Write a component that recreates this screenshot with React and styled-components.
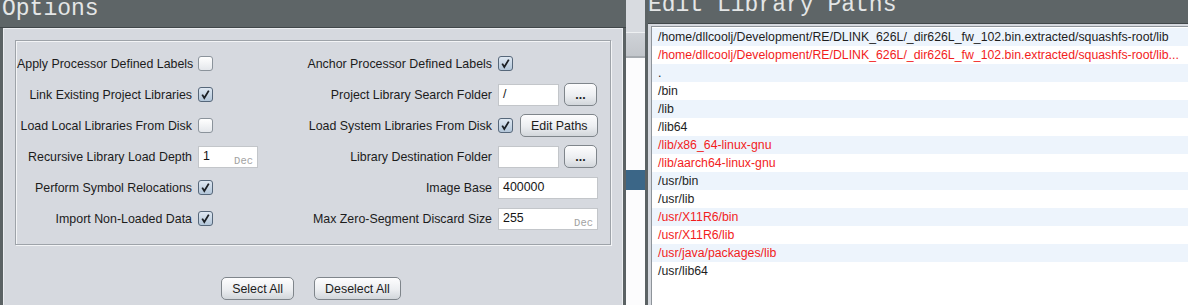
import React from 'react'
import styled, { createGlobalStyle } from 'styled-components'

const GlobalStyle = createGlobalStyle`
  html, body {
    margin: 0;
    padding: 0;
  }
  body {
    width: 1188px;
    height: 305px;
    overflow: hidden;
    background: #fcfcfd;
    font-family: "Liberation Sans", Arial, sans-serif;
    font-size: 12.4px;
    color: #1e1e1e;
  }
`

const Desktop = styled.div`
  display: flex;
  width: 1188px;
  height: 305px;
  overflow: hidden;
`

const TitleBar = styled.header`
  flex: none;
  height: ${(p) => p.height}px;
  line-height: ${(p) => p.lineHeight}px;
  background: #5e6567;
  border-bottom: 1px solid #41474a;
  color: #e4e6e6;
  font-family: "Liberation Mono", "Courier New", monospace;
  font-size: 23px;
  padding-left: ${(p) => p.indent}px;
  white-space: nowrap;
  overflow: hidden;
`

/* ---------- left: options window ---------- */

const OptionsWindow = styled.section`
  flex: none;
  width: 626px;
  display: flex;
  flex-direction: column;
`

const OptionsBody = styled.div`
  flex: 1;
  display: flex;
  flex-direction: column;
  background: #d6d9df;
  border-left: 3px solid #5b6264;
  border-right: 3px solid #5b6264;
  box-shadow: inset 1px 1px 0 #eceef1, inset -1px 0 0 #eceef1;
`

const GroupBox = styled.div`
  margin: 12px 12px 0 12px;
  border: 1px solid #9ea3a9;
  box-shadow: inset 1px 1px 0 #f3f4f6, 1px 1px 0 #f3f4f6;
  padding: 7px 0 10px 1px;
  display: grid;
  grid-template-columns: 175px 60px 228px 100px;
  grid-auto-rows: 31px;
  column-gap: 6px;
  align-items: center;
`

const Label = styled.span`
  text-align: right;
  white-space: nowrap;
  color: #1c1c1c;
`

const Controls = styled.div`
  display: flex;
  align-items: center;
  gap: ${(p) => p.gap || 5}px;
`

const Box = styled.span`
  flex: none;
  width: 13px;
  height: 13px;
  border-radius: 3px;
  border: 1px solid ${(p) => (p.checked ? '#56677a' : '#8b939b')};
  background: ${(p) =>
    p.checked
      ? 'linear-gradient(#dfe8f2, #b3c6d9)'
      : 'linear-gradient(#ffffff, #e4e7eb)'};
  display: flex;
  align-items: center;
  justify-content: center;
`

const Field = styled.div`
  flex: none;
  box-sizing: border-box;
  width: ${(p) => p.width}px;
  height: 22px;
  background: #fff;
  border: 1px solid #c3c6ca;
  display: flex;
  padding: 2px 4px 1px 4px;
  line-height: 14px;
  color: #151515;
`

const Hint = styled.span`
  margin-left: auto;
  align-self: flex-end;
  font-family: "Liberation Mono", monospace;
  font-size: 10.5px;
  line-height: 10px;
  color: #a2a2a2;
`

const Button = styled.button`
  flex: none;
  box-sizing: border-box;
  height: 23px;
  min-width: ${(p) => p.width || 0}px;
  padding: 0 10px;
  border: 1px solid #7f858b;
  border-radius: 5px;
  background: linear-gradient(#fdfdfe, #eceef1 55%, #d2d6db);
  font-family: "Liberation Sans", Arial, sans-serif;
  font-size: 12.4px;
  font-weight: ${(p) => (p.bold ? 700 : 400)};
  white-space: nowrap;
  color: #1c1c1c;
  cursor: default;
`

const ButtonRow = styled.div`
  display: flex;
  justify-content: center;
  gap: 20px;
  margin-top: 32px;
  padding-right: 4px;
`

/* ---------- middle backdrop ---------- */

const Backdrop = styled.div`
  flex: none;
  width: 19px;
  display: flex;
  flex-direction: column;
  background: #fcfcfd;
`

const BackdropTop = styled.div`
  height: 32px;
  background: #d8dbe0;
  border-bottom: 1px solid #eef0f2;
`

const BackdropHeader = styled.div`
  height: 23px;
  background: linear-gradient(#cfd2d7, #c2c6cb);
  border-bottom: 2px solid #a6abb0;
`

const Selection = styled.div`
  margin-top: 112px;
  height: 20px;
  background: #3b6687;
`

/* ---------- right: paths window ---------- */

const PathsWindow = styled.section`
  flex: 1;
  display: flex;
  flex-direction: column;
  border-left: 3px solid #5b6264;
`

const ListFrame = styled.div`
  flex: 1;
  background: #d6d9df;
  padding: 2px 0 0 3px;
  display: flex;
`

const ListBox = styled.div`
  flex: 1;
  background: #fff;
  border-top: 1px solid #8e949a;
  border-left: 1px solid #8e949a;
  padding-top: 1px;
`

const Row = styled.div`
  height: 18px;
  line-height: 18px;
  padding-left: 6px;
  white-space: nowrap;
  overflow: hidden;
  font-size: 12.3px;
  background: ${(p) => (p.striped ? '#edf4fc' : '#ffffff')};
  color: ${(p) => (p.missing ? '#f21d1d' : '#1e1e1e')};
`

function CheckBox({ checked }) {
  return (
    <Box checked={checked}>
      {checked && (
        <svg width="11" height="11" viewBox="0 0 11 11">
          <path d="M2.2 5.6 L4.3 9 L8.8 1.6" fill="none" stroke="#1b1f24" strokeWidth="1.8" strokeLinejoin="miter" />
        </svg>
      )}
    </Box>
  )
}

const paths = [
  ['/home/dllcoolj/Development/RE/DLINK_626L/_dir626L_fw_102.bin.extracted/squashfs-root/lib', false],
  ['/home/dllcoolj/Development/RE/DLINK_626L/_dir626L_fw_102.bin.extracted/squashfs-root/lib...', true],
  ['.', false],
  ['/bin', false],
  ['/lib', false],
  ['/lib64', false],
  ['/lib/x86_64-linux-gnu', true],
  ['/lib/aarch64-linux-gnu', true],
  ['/usr/bin', false],
  ['/usr/lib', false],
  ['/usr/X11R6/bin', true],
  ['/usr/X11R6/lib', true],
  ['/usr/java/packages/lib', true],
  ['/usr/lib64', false],
]

export default function App() {
  return (
    <>
      <GlobalStyle />
      <Desktop>
        <OptionsWindow>
          <TitleBar height={27} lineHeight={19} indent={2}>Options</TitleBar>
          <OptionsBody>
            <GroupBox>
              <Label>Apply Processor Defined Labels</Label>
              <Controls><CheckBox /></Controls>
              <Label>Anchor Processor Defined Labels</Label>
              <Controls><CheckBox checked /></Controls>

              <Label>Link Existing Project Libraries</Label>
              <Controls><CheckBox checked /></Controls>
              <Label>Project Library Search Folder</Label>
              <Controls>
                <Field width={61}>/</Field>
                <Button width={33} bold>...</Button>
              </Controls>

              <Label>Load Local Libraries From Disk</Label>
              <Controls><CheckBox /></Controls>
              <Label>Load System Libraries From Disk</Label>
              <Controls gap={7}>
                <CheckBox checked />
                <Button width={78}>Edit Paths</Button>
              </Controls>

              <Label>Recursive Library Load Depth</Label>
              <Controls>
                <Field width={60}>1<Hint>Dec</Hint></Field>
              </Controls>
              <Label>Library Destination Folder</Label>
              <Controls>
                <Field width={61} />
                <Button width={33} bold>...</Button>
              </Controls>

              <Label>Perform Symbol Relocations</Label>
              <Controls><CheckBox checked /></Controls>
              <Label>Image Base</Label>
              <Controls>
                <Field width={100}>400000</Field>
              </Controls>

              <Label>Import Non-Loaded Data</Label>
              <Controls><CheckBox checked /></Controls>
              <Label>Max Zero-Segment Discard Size</Label>
              <Controls>
                <Field width={100}>255<Hint>Dec</Hint></Field>
              </Controls>
            </GroupBox>
            <ButtonRow>
              <Button>Select All</Button>
              <Button>Deselect All</Button>
            </ButtonRow>
          </OptionsBody>
        </OptionsWindow>

        <Backdrop>
          <BackdropTop />
          <BackdropHeader />
          <Selection />
        </Backdrop>

        <PathsWindow>
          <TitleBar height={23} lineHeight={10} indent={0}>Edit Library Paths</TitleBar>
          <ListFrame>
            <ListBox>
              {paths.map(([path, missing], i) => (
                <Row key={i} striped={i % 2 === 0} missing={missing}>
                  {path}
                </Row>
              ))}
            </ListBox>
          </ListFrame>
        </PathsWindow>
      </Desktop>
    </>
  )
}
